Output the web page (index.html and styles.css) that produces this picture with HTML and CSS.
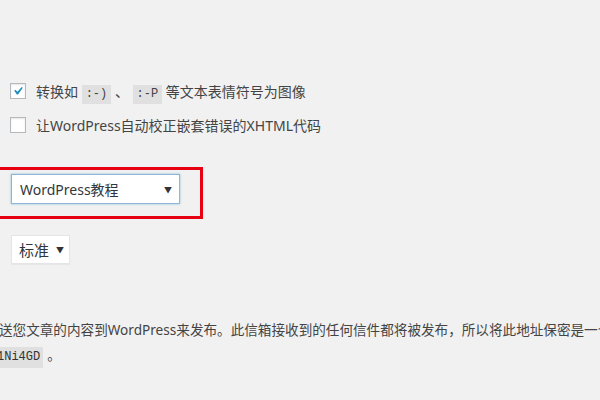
FILE: index.html
```html
<!DOCTYPE html>
<html lang="zh-CN">
<head>
    <meta charset="UTF-8">
    <meta name="viewport" content="width=device-width, initial-scale=1.0">
    <title>撰写设置</title>
    <link rel="stylesheet" href="styles.css">
</head>
<body>
    <div class="wrap">
        <!-- 格式化选项 -->
        <div class="options">
            <label class="opt">
                <span class="box">
                    <svg width="14" height="14" viewBox="0 0 20 20"><path d="M14.83 4.89l1.34.94-5.81 8.38H9.02L5.78 9.67l1.34-1.25 2.57 2.4z" fill="#1e8cbe" transform="translate(-2.2 -1.6) scale(1.18)"/></svg>
                </span>
                <span>转换如 <code>:-)</code> 、 <code>:-P</code> 等文本表情符号为图像</span>
            </label>
            <label class="opt">
                <span class="box"></span>
                <span>让WordPress自动校正嵌套错误的XHTML代码</span>
            </label>
        </div>

        <!-- 默认文章分类 -->
        <div class="mark">
            <div class="select wide">WordPress教程<span class="arrow">▼</span></div>
        </div>

        <!-- 默认文章形式 -->
        <div class="select small">标准<span class="arrow">▼</span></div>

        <!-- 通过电子邮件发布 -->
        <div class="desc">
            <div class="line">送您文章的内容到WordPress来发布。此信箱接收到的任何信件都将被发布，所以将此地址保密是一个</div>
            <div class="line second"><code class="key">1Ni4GD</code><span class="dot">。</span></div>
        </div>
    </div>
</body>
</html>
```

FILE: styles.css
```css
html, body{
    margin: 0; padding: 0;
    background: #f1f1f1;
}
body{
    font-family: "Noto Sans", "Noto Sans CJK SC", sans-serif;
    font-size: 14px; color: #444;
    overflow: hidden;
}
.wrap{
    padding-top: 74px;
}
.opt{ /* 复选框一行 */
    display: flex; align-items: center;
    height: 34px; padding-left: 10px;
    white-space: nowrap;
}
.box{
    display: flex; align-items: center; justify-content: center;
    width: 14px; height: 14px; margin-right: 10px;
    background: #fff; border: 1px solid #b4b9be;
    box-shadow: inset 0 1px 2px rgba(0,0,0,.1);
}
code{
    font-family: "Liberation Mono", monospace;
    font-size: 12px;
    background: #e4e4e4; background: rgba(0,0,0,.07);
    padding: 2px 4px 3px;
}
.mark{ /* 红框 */
    display: inline-block;
    margin: 25px 0 0 -20px;
    padding: 4px 20px 12px 28px;
    border: 3px solid #e60012;
}
.select{
    display: flex; align-items: center; justify-content: space-between;
    box-sizing: border-box;
    background: #fff; color: #32373c;
    font-size: 14px;
}
.wide{
    width: 169px; height: 30px;
    padding: 0 7px 0 8px;
    border: 1px solid #8fb6d8;
    box-shadow: 0 0 2px rgba(30,140,190,.5);
}
.small{
    width: 59px; height: 29px;
    margin: 16px 0 0 11px;
    padding: 0 5px 0 7px;
    border: 1px solid #e5e5e5;
    box-shadow: 0 1px 1px rgba(0,0,0,.04);
    font-size: 15px;
}
.arrow{
    font-size: 8px; color: #333;
}
.desc{
    margin: 53px 0 0 -1px;
    font-size: 13.6px; line-height: 25px; color: #444;
    white-space: nowrap;
}
.second{
    margin-left: -8px;
}
.key{
    color: #333;
    padding: 3px 3px 4px 6px;
}
.dot{
    margin-left: 4px;
}
```
